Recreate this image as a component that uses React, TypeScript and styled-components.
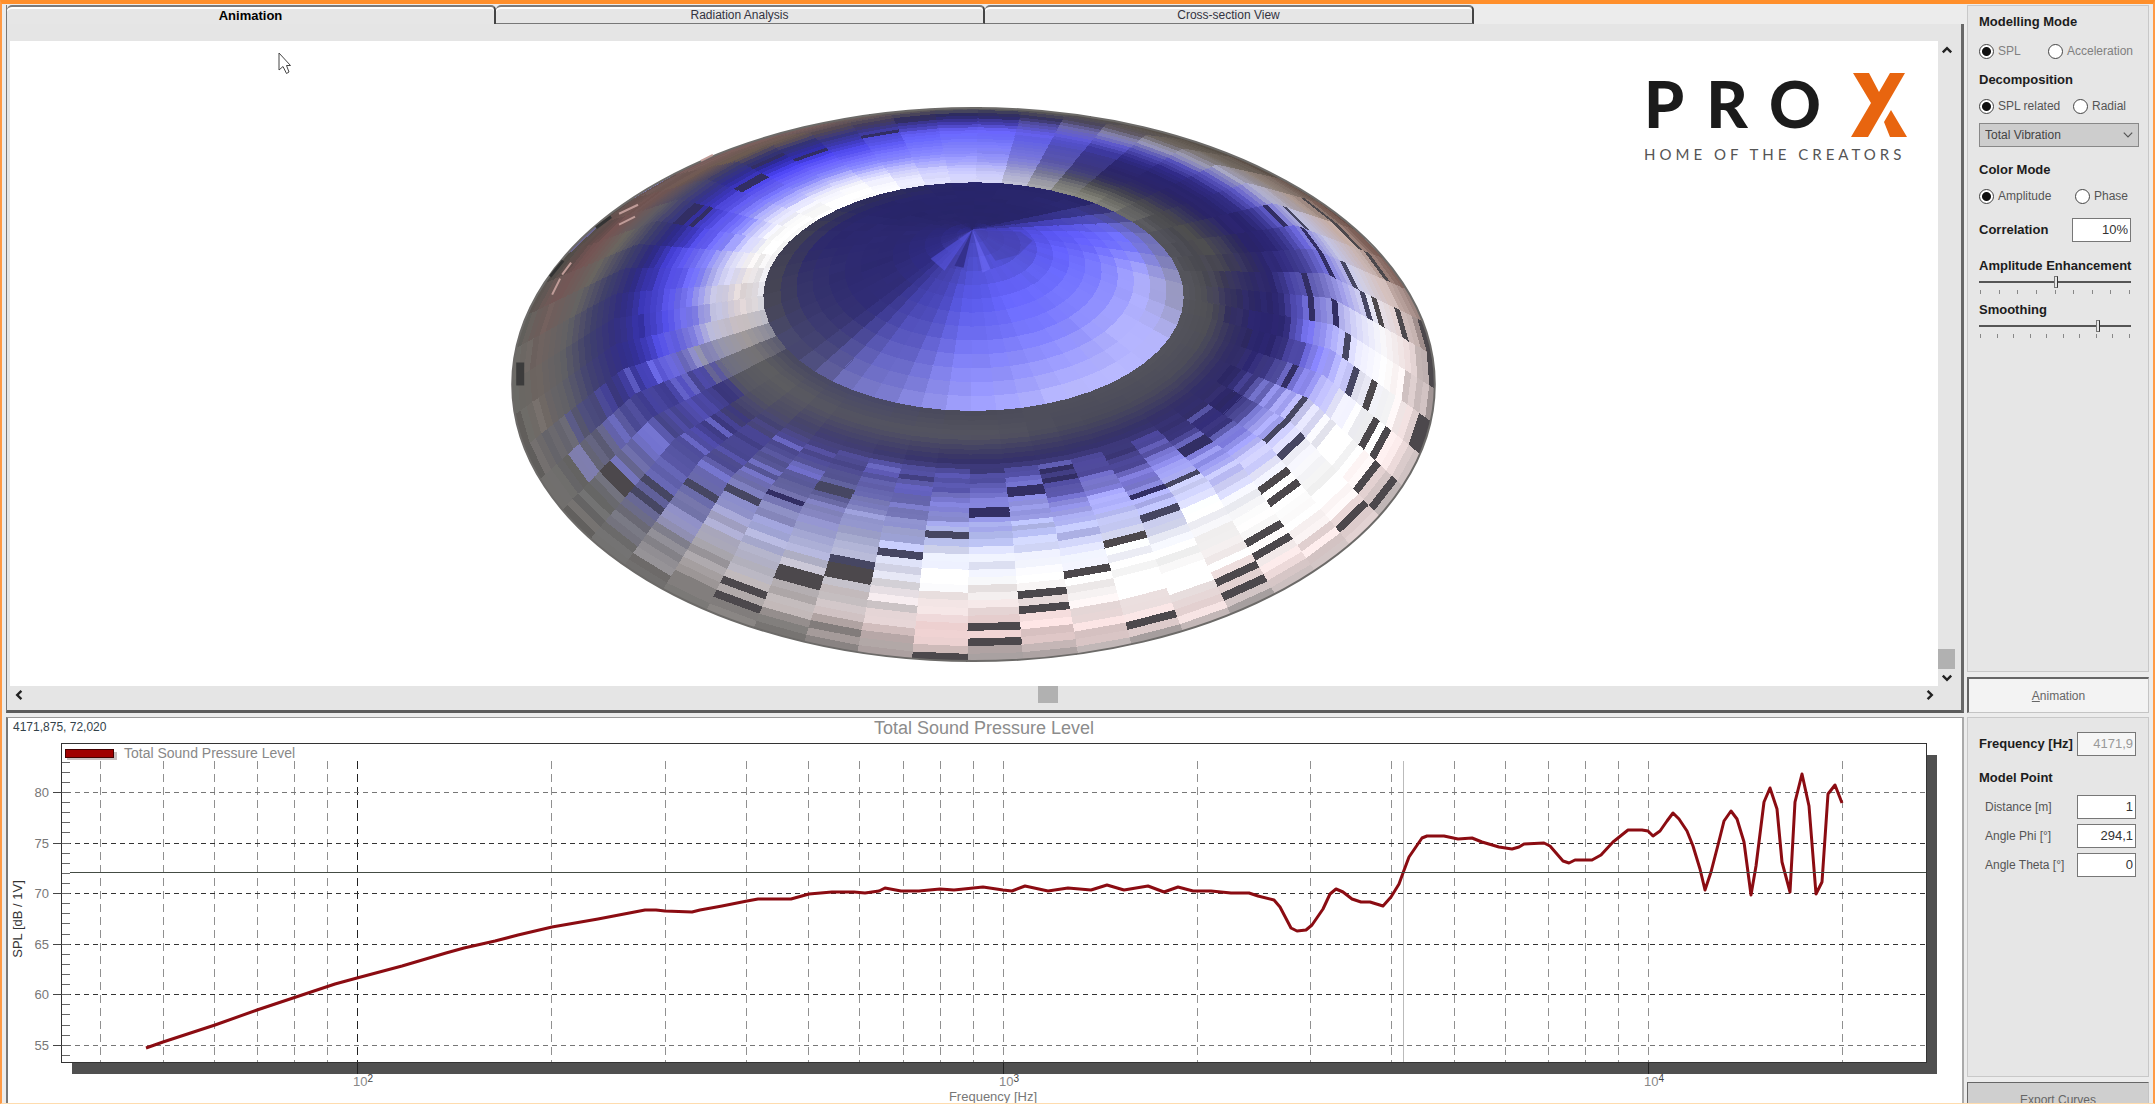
import React from "react";
import styled, { createGlobalStyle } from "styled-components";

const Global = createGlobalStyle`
  * { box-sizing: border-box; }
  html, body { margin: 0; padding: 0; }
  body { background: #ececec; font-family: "Liberation Sans", Arial, sans-serif; font-size: 12px; color: #555; }
  button, input, select { font-family: inherit; font-size: inherit; margin: 0; }
`;

const Shell = styled.main`
  height: 100vh;
  overflow: hidden;
  border-top: 4px solid #ff8f2b;
  border-left: 2px solid #ff9a45;
  border-right: 2px solid #ff9a45;
  border-bottom: 1px solid #ffdcae;
  background: #ececec;
  padding: 1px 4px 0 4px;
  display: grid;
  grid-template-columns: minmax(0, 1fr) 182px;
  grid-template-rows: minmax(0, 708fr) minmax(0, 386fr);
  gap: 4px 3px;
`;

/* ---------- upper panel ---------- */
const Workspace = styled.section`
  display: flex;
  flex-direction: column;
  min-height: 0;
`;

const TabBar = styled.div`
  display: flex;
  height: 19px;
  flex: none;
  border-left: 1px solid #777;
  padding-right: 490px;
`;

const Tab = styled.button<{ $active?: boolean }>`
  flex: 1;
  border: 0;
  border-top: 2px solid #7a7a7a;
  border-right: 2px solid #444;
  border-bottom: ${(p) => (p.$active ? "0" : "1px solid #777")};
  border-top-right-radius: 5px;
  border-top-left-radius: 5px;
  box-shadow: inset 0 2px 0 #fff;
  background: #e6e6e6;
  padding: 0;
  font-size: ${(p) => (p.$active ? "13px" : "12px")};
  font-weight: ${(p) => (p.$active ? 700 : 400)};
  color: ${(p) => (p.$active ? "#000" : "#33333f")};
  line-height: 16px;
`;

const TabBody = styled.div`
  flex: 1;
  min-height: 0;
  background: #e5e5e5;
  border-left: 1px solid #777;
  border-right: 3px solid #686868;
  border-bottom: 3px solid #5c5c5c;
  padding: 17px 6px 7px 3px;
  display: grid;
  grid-template-columns: minmax(0, 1fr) 17px;
  grid-template-rows: minmax(0, 1fr) 17px;
`;

const Viewport = styled.div`
  position: relative;
  background: #fff;
  min-height: 0;
  overflow: hidden;
`;

const Drawing = styled.svg`
  display: block;
  width: 100%;
  height: 100%;
`;

const Pointer = styled.svg`
  position: absolute;
  left: 268px;
  top: 11px;
`;

const Logo = styled.div`
  position: absolute;
  right: 30px;
  top: 31px;
  width: 264px;
`;

const LogoRow = styled.div`
  display: flex;
  justify-content: space-between;
  align-items: flex-start;
  height: 66px;
`;

const Wordmark = styled.span`
  font-family: Lato, sans-serif;
  font-weight: 900;
  font-size: 64px;
  line-height: 64px;
  letter-spacing: 22px;
  color: #1b1b1b;
`;

const Tagline = styled.div`
  margin-top: 6px;
  font-family: Lato, sans-serif;
  font-size: 15px;
  line-height: 20px;
  letter-spacing: 4px;
  white-space: nowrap;
  color: #555;
`;

const ScrollTrack = styled.div<{ $vertical?: boolean }>`
  display: flex;
  flex-direction: ${(p) => (p.$vertical ? "column" : "row")};
  align-items: center;
  background: #e5e5e5;
`;

const ScrollArrow = styled.button`
  width: 17px;
  height: 17px;
  flex: none;
  border: 0;
  padding: 0;
  background: transparent;
  display: grid;
  place-items: center;
`;

const Spacer = styled.div<{ $grow: number }>`
  flex: ${(p) => p.$grow} 1 0;
`;

const Thumb = styled.div<{ $vertical?: boolean }>`
  flex: none;
  background: #b1b1b1;
  width: ${(p) => (p.$vertical ? "17px" : "20px")};
  height: ${(p) => (p.$vertical ? "20px" : "17px")};
`;

/* ---------- chart ---------- */
const ChartPanel = styled.section`
  background: #fff;
  border: 1px solid #999;
  border-left: 2px solid #777;
  border-right: 2px solid #aaa;
  border-bottom: 0;
  min-height: 0;
`;

const ChartText = styled.text`
  font-family: "Liberation Sans", Arial, sans-serif;
`;

/* ---------- sidebar ---------- */
const Side = styled.aside`
  display: flex;
  flex-direction: column;
  gap: 5px;
  min-height: 0;
  overflow: hidden;
`;

const Group = styled.div<{ $fill?: boolean }>`
  flex: ${(p) => (p.$fill ? "1" : "none")};
  min-height: ${(p) => (p.$fill ? "0" : "360px")};
  background: #e6e6e6;
  border: 1px solid #c8c8c8;
  padding: 8px 9px 0 11px;
  display: flex;
  flex-direction: column;
`;

const Heading = styled.div<{ $top: number }>`
  margin-top: ${(p) => p.$top}px;
  font-size: 13px;
  font-weight: 700;
  line-height: 16px;
  color: #1c1c1c;
  white-space: nowrap;
`;

const HeadLabel = styled.label<{ $top: number }>`
  margin-top: ${(p) => p.$top}px;
  font-size: 13px;
  font-weight: 700;
  line-height: 16px;
  color: #1c1c1c;
  white-space: nowrap;
`;

const RadioRow = styled.div<{ $top: number; $first: number }>`
  margin-top: ${(p) => p.$top}px;
  display: grid;
  grid-template-columns: ${(p) => p.$first}px 1fr;
  height: 16px;
`;

const RadioLabel = styled.label<{ $dim?: boolean }>`
  display: flex;
  align-items: center;
  gap: 4px;
  white-space: nowrap;
  line-height: 16px;
  color: ${(p) => (p.$dim ? "#808080" : "#555")};
`;

const Radio = styled.input`
  appearance: none;
  flex: none;
  width: 15px;
  height: 15px;
  border: 1px solid #444;
  border-radius: 50%;
  background: #fff;
  &:checked { background: radial-gradient(circle, #111 0 4px, #fff 5px); }
`;

const Select = styled.select`
  appearance: none;
  margin-top: 9px;
  height: 24px;
  width: 160px;
  border: 1px solid #888;
  border-radius: 0;
  background: #cdcdcd;
  color: #444;
  padding: 0 5px;
  grid-area: 1 / 1;
`;

const SelectWrap = styled.div`
  display: grid;
  width: 160px;
  svg { grid-area: 1 / 1; justify-self: end; align-self: end; margin: 0 5px 6px 0; pointer-events: none; }
`;

const Field = styled.div<{ $top: number; $end: number; $indent?: number }>`
  margin-top: ${(p) => p.$top}px;
  padding-left: ${(p) => p.$indent || 0}px;
  margin-right: ${(p) => p.$end}px;
  display: flex;
  justify-content: space-between;
  align-items: center;
  line-height: 16px;
  white-space: nowrap;
`;

const Box = styled.input<{ $dim?: boolean }>`
  width: 59px;
  height: 24px;
  border: 1px solid #777;
  border-radius: 0;
  background: ${(p) => (p.$dim ? "#f6f6f6" : "#fff")};
  color: ${(p) => (p.$dim ? "#999" : "#333")};
  text-align: right;
  padding: 0 2px 2px;
  font-size: 13px;
`;

const Range = styled.input`
  appearance: none;
  display: block;
  width: 152px;
  height: 16px;
  background: linear-gradient(#555, #555) center / 100% 2px no-repeat;
  &::-webkit-slider-thumb {
    appearance: none;
    width: 4px;
    height: 12px;
    background: #e6e6e6;
    border: 1px solid #777;
    border-right-color: #333;
  }
`;

const Ticks = styled.div`
  display: flex;
  justify-content: space-between;
  width: 152px;
  padding: 0 1px;
  span { width: 1px; height: 4px; background: #888; }
`;

const PushButton = styled.button<{ $pressed?: boolean }>`
  flex: none;
  height: 36px;
  border: 1px solid #c4c4c4;
  border-top: ${(p) => (p.$pressed ? "2px" : "1px")} solid #666;
  border-left: ${(p) => (p.$pressed ? "2px" : "1px")} solid #666;
  background: ${(p) => (p.$pressed ? "#f3f3f3" : "#cfcfcf")};
  color: #666;
  padding: 0;
`;

/* ---------- cone model ---------- */
type Stop = string;
const DEG = Math.PI / 180;
const SECTORS = 52;
const RINGS = 42;
const DOME_RINGS = 13;
const START = 0.8;

// Surround colours, rim to dome edge, every 30 degrees clockwise from the right.
const SURROUND: Stop[][] = [
  "a89c9c f0e0e0 ffffff eeeeff b4b4ff 7470f0 2c2670 2a246e 343060 505054 54545c",
  "c8c0c0 f0dcdc ffffff ffffff f8f8ff c8c8ff 9090f4 2e2870 332e68 4c4c5a 54545c",
  "b0a8a8 f0dcdc fff8f8 ffffff eef0ff c0c4f8 a0a0fa 5650a8 34306a 4a4a5a 50505c",
  "a8a0a0 f0d0d0 f0e0e0 ffffff e4e8ff b4bcf0 8484d8 5c5ab8 343068 545460 4a4a58",
  "706e6c b0a8a8 bcb8bc b8b8d0 a4a8d8 8888c8 5c5c98 5450a0 403c70 545460 484868",
  "6a6866 707070 646478 6868a8 5c5ca8 4a4890 4a46a0 3c3880 545460 5e5e60 484860",
  "6a6a66 6e6561 606064 40406c 34307e 3430a0 5450e8 7c7ae8 c4c4e4 dcd0d0 e0e0e8",
  "504a46 765252 6a6660 404068 2c2880 443ed4 6660fa 8a8aff d8d8ff ffffff ffffff",
  "806060 6a5a50 343470 2c28a0 4840f0 6860ff 8484ff c0c0ff f4f4ff ffffff ffffff",
  "606058 282660 4038a8 6a64ff 7070ff 8080ff 8c8cff a0a0ff c0c0ff d0d0ff d8d8f8",
  "504840 706860 a0a0bc 5450b8 302a88 2a2570 2a2468 302c60 444450 707068 8a8a80",
  "705048 c8b0a8 c4c4e4 6c68dc 38348c 2a2470 2a2468 3a3858 4c4c4c 4a4a52 54545c",
].map((row) => row.split(" "));

// Dome colours, apex to edge.
const DOME: Stop[][] = [
  "4440b0 4c48c8 6462ff 7c7cff b0b0ff 9494b4",
  "4844b8 5050d0 6a6aff 8484ff b0b0ff b8b8ff",
  "4a48c0 5452d8 6866ff 7a7aff 9c9cff c0c0ff",
  "4644b8 5050d0 5c5cf0 7070f4 8c8cfa a4a4ff",
  "4440b8 4440a8 4644b4 5452bc 6868c8 7c7ccc",
  "4440b0 302c88 302c78 302c74 3c3a70 4a4a70",
  "34308c 2e2a80 2c2870 2e2a70 34326a 4a4a50",
  "302c90 2c2878 2c2870 2c2870 2c286c 44444e",
  "2e2a88 2a266c 28256a 28256a 28256a 30305a",
  "28256a 28256a 28256a 28256a 28256a 28256a",
  "302c90 28256a 28256a 28256a 2a276e 28256a",
  "4440b4 4844c8 5854f0 6460ff 7070ff 7070a8",
].map((row) => row.split(" "));

const hex = (c: string) => [0, 2, 4].map((i) => parseInt(c.slice(i, i + 2), 16));
const mix = (a: number[], b: number[], k: number) => a.map((v, i) => v + (b[i] - v) * k);

function sample(table: Stop[][], deg: number, t: number) {
  const a = (((deg % 360) + 360) % 360) / 30;
  const i = Math.floor(a) % 12;
  const n = table[0].length - 1;
  const p = Math.min(t * n, n - 0.001);
  const j = Math.floor(p);
  const k = a - Math.floor(a);
  const row = (r: Stop[]) => mix(hex(r[j]), hex(r[j + 1]), p - j);
  return mix(row(table[i]), row(table[(i + 1) % 12]), k * k * (3 - 2 * k));
}

const noise = (i: number, j: number) => {
  const v = Math.sin(i * 127.1 + j * 311.7) * 43758.5453;
  return v - Math.floor(v);
};

// The surround climbs steeply from the rim, then flattens towards the dome.
const rise = (t: number) => (t < 0.4 ? 1.8 * t : 0.72 + ((t - 0.4) * 0.28) / 0.6);

const surroundPoint = (deg: number, t: number) => {
  const c = Math.cos(deg * DEG);
  const s = Math.sin(deg * DEG);
  return [963 + c * (462 - 252 * t), 344 - 88 * rise(t) + s * (277 - 163 * t)];
};

// Where a drawn point lies between rim (0) and dome edge (1), and at which angle.
function locate(x: number, y: number) {
  let lo = 0;
  let hi = 1;
  for (let n = 0; n < 16; n++) {
    const t = (lo + hi) / 2;
    const u = (x - 963) / (462 - 252 * t);
    const v = (y - 344 + 88 * t) / (277 - 163 * t);
    if (u * u + v * v < 1) lo = t;
    else hi = t;
  }
  const angle = Math.atan2((y - 344 + 88 * lo) / (277 - 163 * lo), (x - 963) / (462 - 252 * lo));
  return { t: lo, deg: angle / DEG };
}

const domePoint = (deg: number, s: number) => {
  const [ex, ey] = surroundPoint(deg, 1);
  return [962 + (ex - 962) * s, 189 + (ey - 189) * s];
};

// Elements without signal, as centre positions in the drawing.
const DARK: [number, number][] = [
  [1298, 203], [1320, 220], [1341, 239], [1362, 261], [1372, 264], [1389, 288], [1305, 258], [1322, 278],
  [1339, 303], [1350, 331], [1358, 360], [1362, 392], [1375, 399], [1288, 371], [1276, 382], [1264, 393],
  [1286, 400], [1279, 432], [1266, 462], [1249, 497], [1256, 508], [1225, 534], [1237, 546], [1370, 427],
  [1384, 443], [1356, 463], [1416, 310], [1421, 338], [1411, 392], [1402, 408], [1180, 414], [1166, 444],
  [1175, 408], [1160, 450], [1130, 460], [1144, 475], [1115, 503], [1076, 530], [1033, 555], [1034, 570],
  [1143, 580], [984, 584], [984, 605], [936, 614], [1018, 454], [1018, 447], [978, 474], [978, 467], [937, 494],
  [891, 511], [850, 536], [846, 528], [852, 522], [785, 541], [736, 548], [726, 561], [738, 566], [798, 536],
  [1282, 337], [1300, 243], [1269, 178], [1283, 187], [1048, 440], [1040, 430], [1340, 195], [1310, 168],
  [1370, 216], [749, 131], [742, 137], [805, 108], [756, 124], [690, 170], [684, 164], [676, 178], [870, 92],
  [900, 82], [618, 444], [624, 450], [650, 447], [658, 453], [692, 453], [700, 458], [734, 456], [742, 462],
  [778, 460], [603, 436], [820, 448], [812, 442],
];

// Elements that catch the light between darker neighbours.
const LIT: [number, number][] = [
  [572, 427], [578, 420], [600, 420], [617, 398], [640, 414], [648, 406], [655, 400], [690, 412], [700, 425],
  [745, 430], [752, 424], [780, 424], [800, 430], [875, 428], [770, 395], [700, 380], [645, 328], [662, 340],
  [680, 350], [615, 330], [1050, 420], [1012, 440], [1183, 380], [1160, 410], [620, 112], [616, 124], [556, 168],
];

const rgb = (c: number[]) => `rgb(${c.map((v) => Math.max(0, Math.min(255, Math.round(v)))).join(",")})`;

type Cell = { d: string; c: number[]; x: number; y: number };

function nearest(cells: Cell[], x: number, y: number) {
  return cells.reduce((best, cell) =>
    (cell.x - x) ** 2 + (cell.y - y) ** 2 < (best.x - x) ** 2 + (best.y - y) ** 2 ? cell : best
  );
}

function buildCone() {
  const cells: Cell[] = [];
  const step = 360 / SECTORS;
  const quad = (f: (a: number, t: number) => number[], a: number, t0: number, t1: number) =>
    [f(a, t0), f(a + step, t0), f(a + step, t1), f(a, t1)]
      .map((p) => `${p[0].toFixed(1)},${p[1].toFixed(1)}`)
      .join(" ");
  for (let j = 0; j < RINGS; j++) {
    for (let i = 0; i < SECTORS; i++) {
      const a = START + i * step;
      const [x, y] = surroundPoint(a + step / 2, (j + 0.5) / RINGS);
      const at = locate(x, y);
      const deg = (at.deg + 360) % 360;
      const front = deg > 2 && deg < 172;
      const back = deg > 235 && deg < 320;
      let rough = front ? (at.t < 0.76 ? 1 : 0) : at.t < 0.1 || at.t > 0.42 ? 0.5 : 0;
      if (back) rough = 0.25;
      const lean = front && deg > 95 ? 1.4 : 1;
      const shift = rough * lean * ((noise(i, 7) - 0.5) * 0.06 + (noise(i, j) - 0.5) * 0.05);
      const gain = 1 + rough * lean * (noise(i + 3, j + 9) - 0.5) * 0.16;
      const c = sample(SURROUND, deg, Math.max(0, Math.min(1, at.t + shift))).map((v) => v * gain);
      cells.push({ d: quad(surroundPoint, a, j / RINGS, (j + 1) / RINGS), c, x, y });
    }
  }
  LIT.forEach(([x, y]) => {
    const cell = nearest(cells, x, y);
    cell.c = mix(cell.c, [144, 144, 255], 0.4);
  });
  DARK.forEach(([x, y]) => {
    const cell = nearest(cells, x, y);
    const depth = cell.c[2] - cell.c[0];
    cell.c = depth > 60 ? [50, 46, 100] : depth > 25 ? [70, 70, 98] : [76, 72, 76];
  });
  const dome: { d: string; c: number[] }[] = [];
  for (let j = 0; j < DOME_RINGS; j++) {
    for (let i = 0; i < SECTORS; i++) {
      const a = START + i * step;
      const c = sample(DOME, a + step / 2, (j + 0.5) / DOME_RINGS).map((v) => v * (1 + (noise(i, j + 40) - 0.5) * 0.03));
      dome.push({ d: quad(domePoint, a, j / DOME_RINGS, (j + 1) / DOME_RINGS), c });
    }
  }
  return { cells, dome };
}

const cone = buildCone();

const Cone = () => (
  <Drawing viewBox="0 0 1927 646" role="img" aria-label="Cone vibration model">
    <g shapeRendering="crispEdges">
      {cone.cells.map((q, i) => (
        <polygon key={i} points={q.d} fill={rgb(q.c)} stroke={rgb(q.c)} strokeWidth="1" />
      ))}
      {cone.dome.map((q, i) => (
        <polygon key={i} points={q.d} fill={rgb(q.c)} stroke={rgb(q.c)} strokeWidth="1" />
      ))}
    </g>
    <path d="M962 189 L920 218 L934 230 Z" fill="#5c5af0" opacity="0.5" />
    <path d="M962 189 L944 225 L953 227 Z" fill="#34308c" />
    <path d="M962 189 L972 232 L980 228 Z" fill="#7470ff" opacity="0.5" />
    <path d="M964 189 L1010 191 L1022 200 L1008 214 L985 220 Z" fill="#4440a8" opacity="0.5" />
    <ellipse cx="963" cy="344" rx="462" ry="277" fill="none" stroke="#6c6a68" strokeWidth="2" />
    <rect x="505" y="322" width="8" height="23" fill="#3c3c3c" />
    <path
      d="M608 173 L627 164 M608 184 L624 176 M541 254 L549 238 M551 234 L560 222 M690 120 L702 114"
      fill="none"
      stroke="#c09c98"
      strokeWidth="2"
    />
    <path d="M585 187 L600 176 M539 236 L552 220" fill="none" stroke="#333" strokeWidth="3" />
  </Drawing>
);

/* ---------- chart data ---------- */
const xOf = (hz: number) => Math.round(357 + 645.5 * (Math.log10(hz) - 2)) + 0.5;
const yOf = (db: number) => Math.round(793 + (80 - db) * 10.11) + 0.5;
const FREQS = [
  40, 50, 60, 70, 80, 90, 100, 200, 300, 400, 500, 600, 700, 800, 900, 1000, 2000, 3000, 4000, 5000, 6000, 7000, 8000,
  9000, 10000, 20000,
];
const LEVELS = [80, 75, 70, 65, 60, 55];
const MINOR = Array.from({ length: 30 }, (_, i) => 54 + i);
const CURVE =
  "146,1049 163,1043 215,1026 257,1011 296,998 335,985 357,979 402,967 446,954 464,949 495,942 518,936 552,928 598,920 645,911 656,911 665,912 692,913 700,911 722,907 747,902 758,900 791,900 809,895 832,893 854,893 865,894 879,892 885,889 901,892 919,892 940,890 954,891 983,888 1003,891 1012,892 1025,887 1048,892 1068,889 1091,891 1107,886 1124,891 1148,887 1164,893 1178,888 1193,892 1211,892 1231,894 1249,894 1258,897 1274,901 1280,908 1291,929 1297,932 1306,931 1312,926 1323,910 1330,895 1336,890 1343,893 1352,900 1361,903 1370,903 1383,907 1391,898 1399,885 1403,874 1409,858 1422,839 1427,837 1444,837 1458,840 1472,839 1482,843 1499,848 1512,850 1519,848 1524,845 1544,844 1550,847 1563,862 1569,864 1575,861 1592,861 1601,856 1613,843 1628,831 1642,831 1648,832 1653,837 1660,832 1667,822 1673,814 1679,820 1687,832 1693,847 1700,870 1705,891 1711,873 1719,842 1724,822 1731,812 1737,820 1744,843 1751,896 1756,867 1764,803 1770,789 1777,810 1782,863 1790,893 1795,803 1802,775 1809,807 1816,895 1822,883 1828,795 1835,786 1842,804";

const Chart = () => (
  <Drawing viewBox="8 719 1954 384" preserveAspectRatio="xMinYMin meet">
    <rect x="72" y="1064" width="1865" height="11" fill="#505050" />
    <rect x="1927" y="756" width="10" height="319" fill="#505050" />
    <rect x="61.5" y="744.5" width="1865" height="319" fill="#fff" stroke="#333" />
    {[100, 1000, 10000].map((f) => (
      <line key={f} x1={xOf(f)} x2={xOf(f)} y1="1064" y2="1075" stroke="#222" />
    ))}
    {FREQS.map((f) => (
      <line
        key={f}
        x1={xOf(f)}
        x2={xOf(f)}
        y1="762"
        y2="1063"
        stroke={f === 100 ? "#222" : "#909090"}
        strokeDasharray="8 5"
      />
    ))}
    {LEVELS.map((l) => (
      <g key={l}>
        <line
          x1="66"
          x2="1926"
          y1={yOf(l)}
          y2={yOf(l)}
          stroke={l === 80 || l === 55 ? "#777" : "#333"}
          strokeDasharray="5 4"
        />
        <line x1="53" x2="62" y1={yOf(l)} y2={yOf(l)} stroke="#444" />
        <ChartText x="49" y={yOf(l) + 4} textAnchor="end" fontSize="13" fill="#777">
          {l}
        </ChartText>
      </g>
    ))}
    {MINOR.map((l) => (
      <line key={l} x1="62" x2="70" y1={yOf(l)} y2={yOf(l)} stroke="#666" />
    ))}
    <line x1="1403.5" x2="1403.5" y1="762" y2="1063" stroke="#bbb" />
    <polyline points={CURVE} fill="none" stroke="#8b0c12" strokeWidth="3" strokeLinejoin="round" />
    <line x1="70" x2="1926" y1="873.5" y2="873.5" stroke="#444c44" />
    <rect x="67" y="753" width="50" height="8" fill="#c8c0c0" />
    <rect x="65.5" y="750.5" width="48" height="8" fill="#a00000" stroke="#400" />
    <ChartText x="124" y="759" fontSize="14" fill="#888">
      Total Sound Pressure Level
    </ChartText>
    <ChartText x="984" y="735" textAnchor="middle" fontSize="18" fill="#8c8c8c">
      Total Sound Pressure Level
    </ChartText>
    <ChartText x="13" y="732" fontSize="12" fill="#33424a">
      4171,875, 72,020
    </ChartText>
    {["2", "3", "4"].map((e, i) => (
      <ChartText key={e} x={353 + Math.round(645.5 * i)} y="1087" fontSize="13" fill="#888">
        10
        <tspan dy="-4" fontSize="10" fill="#444">
          {e}
        </tspan>
      </ChartText>
    ))}
    <ChartText x="993" y="1102" textAnchor="middle" fontSize="13" fill="#777">
      Frequency [Hz]
    </ChartText>
    <ChartText transform="translate(22 920) rotate(-90)" textAnchor="middle" fontSize="13" fill="#333">
      SPL [dB / 1V]
    </ChartText>
  </Drawing>
);

const Chevron = ({ turn, color = "#222", w = 2 }: { turn: number; color?: string; w?: number }) => (
  <svg width="12" height="12" viewBox="0 0 10 10" aria-hidden="true">
    <path d="M1.5 3 L5 6.5 L8.5 3" fill="none" stroke={color} strokeWidth={w} transform={`rotate(${turn} 5 5)`} />
  </svg>
);

const Slider = ({ id, value, ticks }: { id: string; value: number; ticks: number }) => (
  <div>
    <Range id={id} type="range" min={0} max={100} defaultValue={value} />
    <Ticks>
      {Array.from({ length: ticks }, (_, i) => (
        <span key={i} />
      ))}
    </Ticks>
  </div>
);

const RadioOption = ({ name, label, on, dim }: { name: string; label: string; on?: boolean; dim?: boolean }) => (
  <RadioLabel $dim={dim}>
    <Radio type="radio" name={name} defaultChecked={on} />
    {label}
  </RadioLabel>
);

const POINT_FIELDS = [
  { id: "distance", label: "Distance [m]", value: "1" },
  { id: "phi", label: "Angle Phi [°]", value: "294,1" },
  { id: "theta", label: "Angle Theta [°]", value: "0" },
];

export default function App() {
  return (
    <>
      <Global />
      <Shell>
        <Workspace>
          <TabBar role="tablist">
            <Tab role="tab" aria-selected $active>
              Animation
            </Tab>
            <Tab role="tab">Radiation Analysis</Tab>
            <Tab role="tab">Cross-section View</Tab>
          </TabBar>
          <TabBody>
            <Viewport>
              <Cone />
              <Pointer width="14" height="24" viewBox="0 0 14 24" aria-hidden="true">
                <path d="M1 1 V18 L5 14.5 L8.5 21.5 L11 20 L8.5 13.5 H12.5 Z" fill="#fff" stroke="#444" />
              </Pointer>
              <Logo>
                <LogoRow>
                  <Wordmark>PRO</Wordmark>
                  <svg width="57" height="66" viewBox="0 0 57 66" aria-label="X">
                    <path d="M2 1 H18 L28 20 L39 1 H54 L17 65 H0 L20 31 Z M40 38 L56 65 H39 L33 50 Z" fill="#e8650f" />
                  </svg>
                </LogoRow>
                <Tagline>HOME OF THE CREATORS</Tagline>
              </Logo>
            </Viewport>
            <ScrollTrack $vertical>
              <ScrollArrow aria-label="Scroll up">
                <Chevron turn={180} />
              </ScrollArrow>
              <Spacer $grow={1} />
              <Thumb $vertical />
              <ScrollArrow aria-label="Scroll down">
                <Chevron turn={0} />
              </ScrollArrow>
            </ScrollTrack>
            <ScrollTrack>
              <ScrollArrow aria-label="Scroll left">
                <Chevron turn={90} />
              </ScrollArrow>
              <Spacer $grow={116} />
              <Thumb />
              <Spacer $grow={99} />
              <ScrollArrow aria-label="Scroll right">
                <Chevron turn={-90} />
              </ScrollArrow>
            </ScrollTrack>
          </TabBody>
        </Workspace>

        <Side>
          <Group $fill>
            <Heading $top={0}>Modelling Mode</Heading>
            <RadioRow $top={13} $first={69}>
              <RadioOption name="mode" label="SPL" on dim />
              <RadioOption name="mode" label="Acceleration" dim />
            </RadioRow>
            <Heading $top={13}>Decomposition</Heading>
            <RadioRow $top={10} $first={94}>
              <RadioOption name="decomposition" label="SPL related" on />
              <RadioOption name="decomposition" label="Radial" />
            </RadioRow>
            <SelectWrap>
              <Select aria-label="Vibration component">
                <option>Total Vibration</option>
              </Select>
              <Chevron turn={0} color="#555" w={1} />
            </SelectWrap>
            <Heading $top={15}>Color Mode</Heading>
            <RadioRow $top={10} $first={96}>
              <RadioOption name="color" label="Amplitude" on />
              <RadioOption name="color" label="Phase" />
            </RadioRow>
            <Field $top={14} $end={8}>
              <HeadLabel $top={0} htmlFor="correlation">
                Correlation
              </HeadLabel>
              <Box id="correlation" defaultValue="10%" />
            </Field>
            <HeadLabel $top={16} htmlFor="enhancement">
              Amplitude Enhancement
            </HeadLabel>
            <Slider id="enhancement" value={51} ticks={9} />
            <HeadLabel $top={8} htmlFor="smoothing">
              Smoothing
            </HeadLabel>
            <Slider id="smoothing" value={79} ticks={10} />
          </Group>
          <PushButton $pressed>
            <u>A</u>nimation
          </PushButton>
        </Side>

        <ChartPanel>
          <Chart />
        </ChartPanel>

        <Side>
          <Group>
            <Field $top={6} $end={3}>
              <HeadLabel $top={0} htmlFor="frequency">
                Frequency [Hz]
              </HeadLabel>
              <Box id="frequency" defaultValue="4171,9" $dim />
            </Field>
            <Heading $top={14}>Model Point</Heading>
            {POINT_FIELDS.map((f, i) => (
              <Field key={f.id} $top={i ? 5 : 9} $end={3} $indent={6}>
                <label htmlFor={f.id}>{f.label}</label>
                <Box id={f.id} defaultValue={f.value} />
              </Field>
            ))}
          </Group>
          <PushButton>Export Curves</PushButton>
        </Side>
      </Shell>
    </>
  );
}
